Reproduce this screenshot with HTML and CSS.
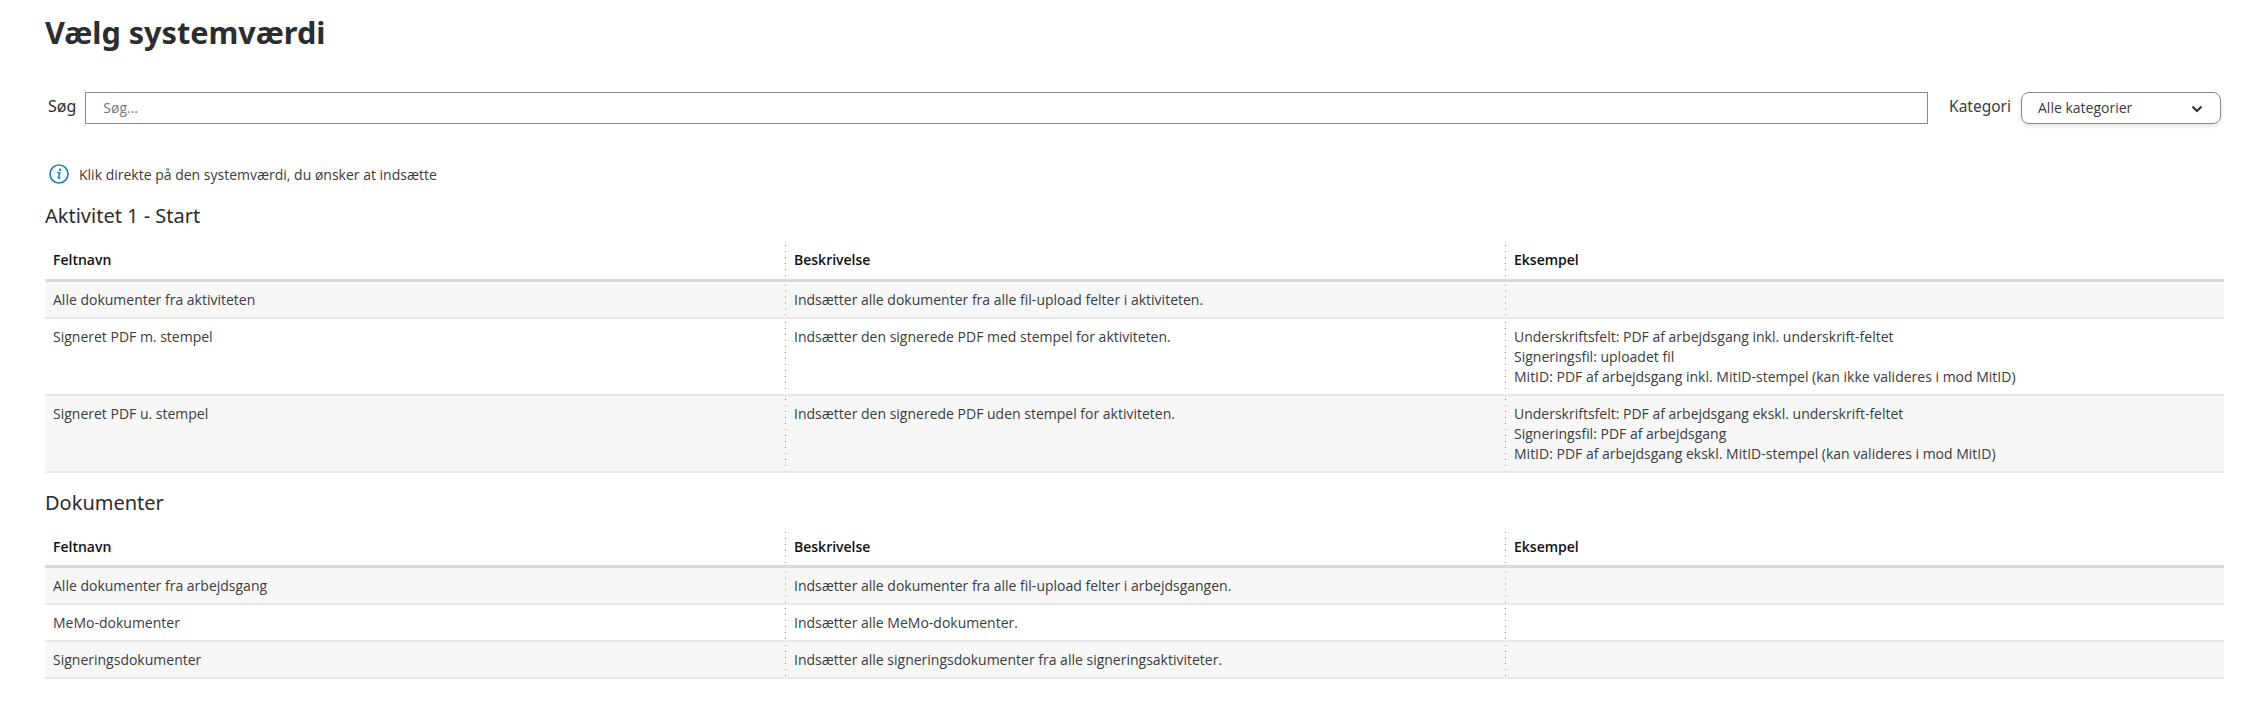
FILE: index.html
```html
<!DOCTYPE html>
<html lang="da">
<head>
<meta charset="utf-8">
<title>Vælg systemværdi</title>
<link rel="stylesheet" href="styles.css">
</head>
<body>
<main class="page">
  <h1 class="title">Vælg systemværdi</h1>
  <div class="filters">
    <label class="label">Søg</label>
    <div class="search">Søg...</div>
    <label class="label label-cat">Kategori</label>
    <div class="select">
      <span class="select-text">Alle kategorier</span>
      <svg class="chev" width="12" height="8" viewBox="0 0 12 8"><path d="M1.5 1.5 6 6l4.5-4.5" fill="none" stroke="#2b2d2e" stroke-width="2"/></svg>
    </div>
  </div>
  <div class="hint">
    <svg class="info" width="20" height="20" viewBox="0 0 20 20"><circle cx="10" cy="10" r="9" fill="none" stroke="#1b82c9" stroke-width="1.7"/><circle cx="11" cy="5.8" r="1.2" fill="#1b82c9"/><path d="M8.3 8.7h2.5l-1.4 5c-.2.7.5.8 1.9-.2" fill="none" stroke="#1b82c9" stroke-width="1.5"/></svg>
    <span>Klik direkte på den systemværdi, du ønsker at indsætte</span>
  </div>

  <h2 class="section">Aktivitet 1 - Start</h2>
  <table class="grid">
    <thead><tr><th>Feltnavn</th><th>Beskrivelse</th><th>Eksempel</th></tr></thead>
    <tbody>
      <tr><td>Alle dokumenter fra aktiviteten</td><td>Indsætter alle dokumenter fra alle fil-upload felter i aktiviteten.</td><td></td></tr>
      <tr><td>Signeret PDF m. stempel</td><td>Indsætter den signerede PDF med stempel for aktiviteten.</td><td>Underskriftsfelt: PDF af arbejdsgang inkl. underskrift-feltet<br>Signeringsfil: uploadet fil<br>MitID: PDF af arbejdsgang inkl. MitID-stempel (kan ikke valideres i mod MitID)</td></tr>
      <tr><td>Signeret PDF u. stempel</td><td>Indsætter den signerede PDF uden stempel for aktiviteten.</td><td>Underskriftsfelt: PDF af arbejdsgang ekskl. underskrift-feltet<br>Signeringsfil: PDF af arbejdsgang<br>MitID: PDF af arbejdsgang ekskl. MitID-stempel (kan valideres i mod MitID)</td></tr>
    </tbody>
  </table>

  <h2 class="section section-next">Dokumenter</h2>
  <table class="grid">
    <thead><tr><th>Feltnavn</th><th>Beskrivelse</th><th>Eksempel</th></tr></thead>
    <tbody>
      <tr><td>Alle dokumenter fra arbejdsgang</td><td>Indsætter alle dokumenter fra alle fil-upload felter i arbejdsgangen.</td><td></td></tr>
      <tr><td>MeMo-dokumenter</td><td>Indsætter alle MeMo-dokumenter.</td><td></td></tr>
      <tr><td>Signeringsdokumenter</td><td>Indsætter alle signeringsdokumenter fra alle signeringsaktiviteter.</td><td></td></tr>
    </tbody>
  </table>
</main>
</body>
</html>
```
FILE: styles.css
```css
* { box-sizing: border-box; }
html, body { margin: 0; background: #fff; }
body { font-family: "Open Sans", "Liberation Sans", sans-serif; font-size: 14px; color: #2b2d2e; }
.page { padding: 0 44px 0 45px; height: 708px; overflow: hidden; }
.title { margin: 0; padding-top: 13px; height: 52px; font: 700 30.6px/38px "Noto Sans", sans-serif; color: #2b2d2e; }
.filters { display: flex; align-items: center; margin-top: 40px; height: 32px; padding-right: 3px; }
.label { font: 16px/20px "Noto Sans", sans-serif; margin-right: 9px; margin-left: 3px; margin-top: -4px; }
.label-cat { font-size: 15.5px; margin-left: 21px; margin-right: 10px; color: #3a3c3e; }
.search { flex: 1; height: 32px; border: 1px solid #8a8a8a; padding: 0 17px; line-height: 30px; color: #777; }
.select { width: 200px; height: 32px; border: 1px solid #8a8a8a; border-radius: 8px; padding: 0 16px; display: flex; align-items: center; justify-content: space-between; box-shadow: 0 2px 4px rgba(0,0,0,.12); color: #3a3c3e; }
.select-text { margin-top: -2px; }
.chev { margin-right: 1px; margin-top: 1px; }
.hint { display: flex; align-items: center; gap: 10px; margin-top: 40px; height: 20px; padding-left: 4px; color: #3a3c3e; }
.section { margin: 18px 0 0; font: 400 20px/28px "Noto Sans", sans-serif; color: #2b2d2e; }
.section-next { margin-top: 16px; }
.grid { width: 2179px; margin-top: 12px; border-collapse: collapse; table-layout: fixed; }
.grid th:nth-child(1), .grid td:nth-child(1) { width: 740px; }
.grid th:nth-child(2), .grid td:nth-child(2) { width: 720px; }
.grid th { text-align: left; font-weight: 600; color: #111; height: 38px; padding: 0 8px 1px; border-bottom: 3px solid #d9d9d9; }
.grid td { padding: 8px 8px 7px; line-height: 20px; vertical-align: top; border-bottom: 2px solid #e8e8e8; color: #3a3c3e; }
.grid th + th, .grid td + td {
  padding-left: 9px;
  background-image: linear-gradient(#8a8a8a 1px, transparent 1px);
  background-size: 1px 6px;
  background-repeat: repeat-y;
  background-position: 0 3px;
}
.grid tbody tr:nth-child(odd) { background: #f7f7f7; }
```
